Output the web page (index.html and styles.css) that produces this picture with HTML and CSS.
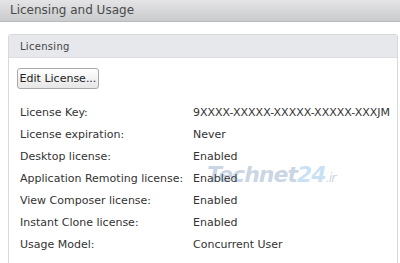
FILE: index.html
```html
<!DOCTYPE html>
<html lang="en">
  <head>
    <meta charset="UTF-8" />
    <title>Licensing and Usage</title>
    <link rel="stylesheet" href="styles.css">
  </head>
  <body>
    <!-- Page header -->
    <div class="page-header">Licensing and Usage</div>

    <!-- Licensing panel -->
    <div class="panel">
      <div class="panel-header">Licensing</div>
      <div class="panel-body">
        <button class="btn">Edit License...</button>
        <div class="info-list">
          <div class="info-row"><span class="info-label">License Key:</span><span class="info-value">9XXXX-XXXXX-XXXXX-XXXXX-XXXJM</span></div>
          <div class="info-row"><span class="info-label">License expiration:</span><span class="info-value">Never</span></div>
          <div class="info-row"><span class="info-label">Desktop license:</span><span class="info-value">Enabled</span></div>
          <div class="info-row"><span class="info-label">Application Remoting license:</span><span class="info-value">Enabled</span></div>
          <div class="info-row"><span class="info-label">View Composer license:</span><span class="info-value">Enabled</span></div>
          <div class="info-row"><span class="info-label">Instant Clone license:</span><span class="info-value">Enabled</span></div>
          <div class="info-row"><span class="info-label">Usage Model:</span><span class="info-value">Concurrent User</span></div>
        </div>
        <span class="watermark">Technet<b>24</b><small>.ir</small></span>
      </div>
    </div>
  </body>
</html>
```

FILE: styles.css
```css
/* Base */
* {
  margin: 0;
  padding: 0;
  box-sizing: border-box;
}

body {
  background-color: #ffffff;
  font-family: "DejaVu Sans", sans-serif;
  font-size: 11px;
  color: #333333;
  overflow: hidden;
}

/* Page header */
.page-header {
  height: 22px;
  padding: 3px 0 0 10px;
  font-size: 12px;
  color: #4a4a4a;
  background: linear-gradient(#e4e4e6, #c9cbcc);
  border-bottom: 1px solid #b7b9ba;
}

/* Panel */
.panel {
  margin: 12px 2px 0 8px;
  border: 1px solid #d9d9dc;
  border-bottom: none;
  border-radius: 3px 3px 0 0;
  height: 240px;
}

.panel-header {
  height: 23px;
  padding: 6px 0 0 11px;
  font-size: 10px;
  letter-spacing: 0.3px;
  color: #444444;
  background-color: #e7e8ec;
  border-bottom: 1px solid #dcdde0;
}

.panel-body {
  position: relative;
  padding: 10px 0 0 8px;
}

/* Button */
.btn {
  height: 21px;
  width: 82px;
  font-family: "DejaVu Sans", sans-serif;
  font-size: 11px;
  color: #222222;
  border: 1px solid #a8a8a8;
  border-radius: 3px;
  background: linear-gradient(#ffffff, #e6e6e6);
}

/* Info list */
.info-list {
  margin-top: 12px;
  padding-left: 3px;
}

.info-row {
  display: flex;
  height: 22px;
  align-items: center;
}

.info-label {
  width: 173px;
}

.info-value {
  color: #333333;
}

/* Watermark */
.watermark {
  position: absolute;
  left: 198px;
  top: 104px;
  font-family: "DejaVu Sans", sans-serif;
  font-style: italic;
  font-weight: bold;
  font-size: 22px;
  letter-spacing: -1px;
  color: rgba(70, 110, 160, 0.3);
}

.watermark b {
  color: rgba(100, 170, 220, 0.35);
}

.watermark small {
  font-size: 13px;
  font-weight: normal;
}
```
